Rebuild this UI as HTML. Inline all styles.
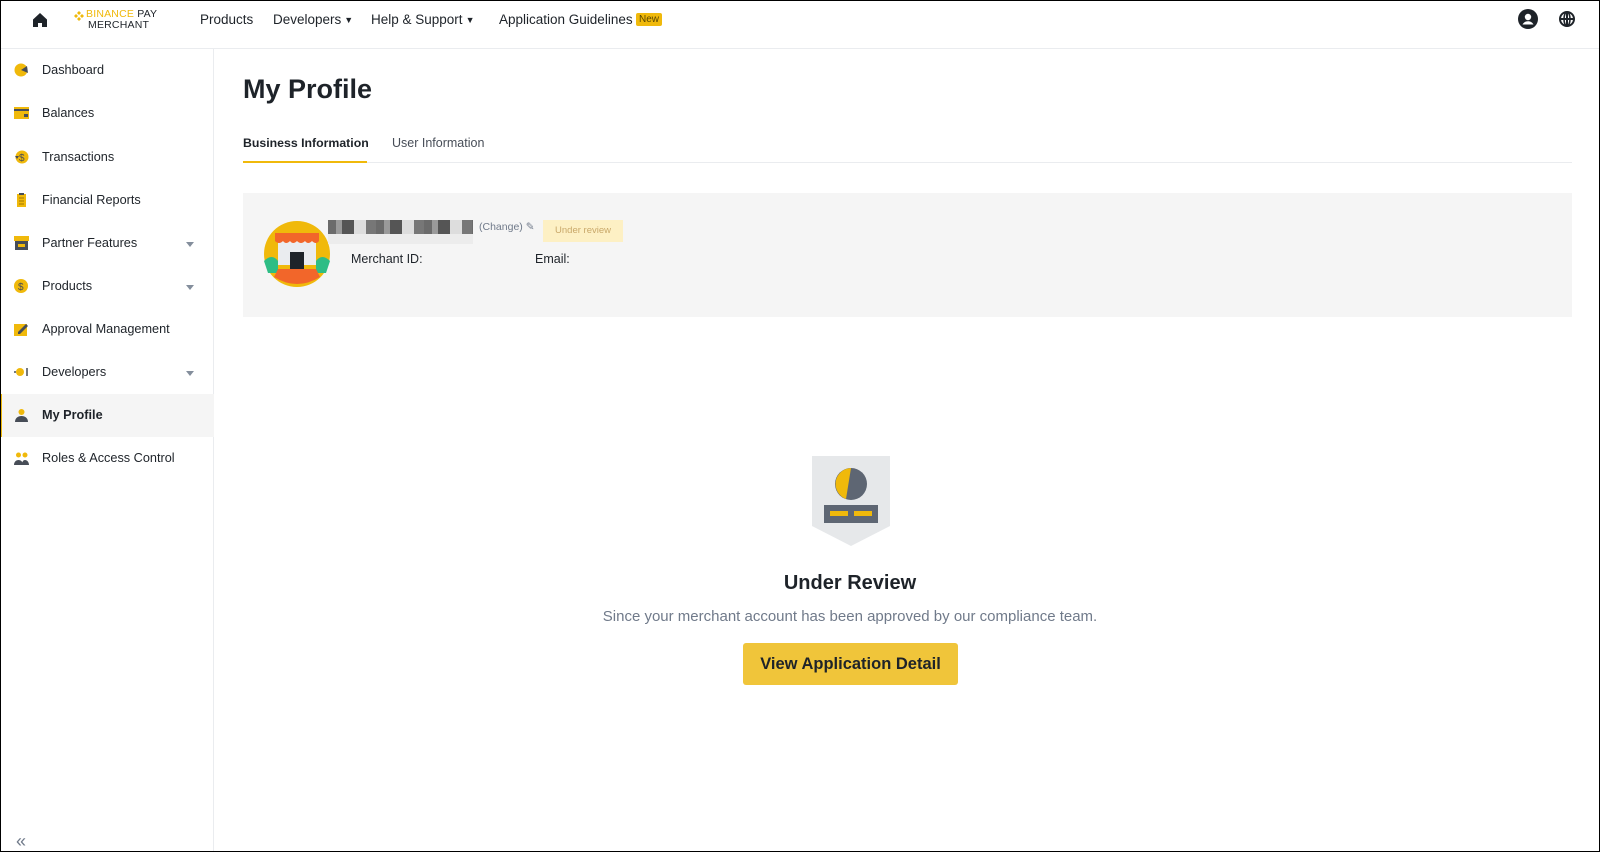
<!DOCTYPE html>
<html><head><meta charset="utf-8"><style>
*{box-sizing:border-box;margin:0;padding:0}
body{width:1600px;height:852px;overflow:hidden;background:#fff;font-family:"Liberation Sans",sans-serif;color:#1e2329;position:relative}
.frame{position:absolute;left:0;top:0;width:1600px;height:852px;border:1px solid #000;pointer-events:none;z-index:10}
.nav{position:absolute;left:0;top:0;width:1600px;height:49px;border-bottom:1px solid #eaecef;font-size:13.5px}
.nav span{position:absolute;top:12px}
.nav i{font-style:normal;font-size:9px;position:relative;top:-1px;margin-left:3px}
.side{position:absolute;left:0;top:49px;width:214px;height:803px;border-right:1px solid #eaecef}
.it{position:absolute;left:0;width:214px;height:43px;font-size:12.7px;color:#1e2329}
.it .t{position:absolute;left:42px;top:14px}
.it .ic{position:absolute;left:14px;top:14px;width:15px;height:14px}
.it .ar{position:absolute;left:186px;top:20px;border-left:4.5px solid transparent;border-right:4.5px solid transparent;border-top:5px solid #848e9c}
.abs{position:absolute}
</style></head><body>
<div class="nav">
<svg class="abs" style="left:32px;top:12px" width="16" height="16" viewBox="0 0 16 16"><path d="M8 1L1 7.5V15h5v-4h4v4h5V7.5z" fill="#1e2329"/></svg>
<svg class="abs" style="left:74px;top:11px" width="10" height="10" viewBox="0 0 10 10"><path d="M5 0L7 2 5 4 3 2zM0 5l2-2 2 2-2 2zM6 5l2-2 2 2-2 2zM5 6l2 2-2 2-2-2z" fill="#f0b90b"/></svg>
<div class="abs" style="left:86px;top:9px;font-size:10.5px;line-height:11px;letter-spacing:.2px"><span style="position:static;color:#f0b90b">BINANCE</span> PAY<br><span style="position:static;margin-left:2px">MERCHANT</span></div>
<span style="left:200px">Products</span>
<span style="left:273px">Developers<i>▼</i></span>
<span style="left:371px">Help &amp; Support<i>▼</i></span>
<span style="left:499px">Application Guidelines</span>
<span style="left:636px;top:13px;background:#f0b90b;font-size:10px;padding:1px 3px;border-radius:2px;color:#5a4600">New</span>
<svg class="abs" style="left:1518px;top:9px" width="20" height="20" viewBox="0 0 20 20"><circle cx="10" cy="10" r="10" fill="#1e2329"/><circle cx="10" cy="8" r="3.2" fill="#fff"/><path d="M4.5 15.5c1.5-2.5 3.5-3.2 5.5-3.2s4 .7 5.5 3.2z" fill="#fff"/></svg>
<svg class="abs" style="left:1559px;top:11px" width="16" height="16" viewBox="0 0 16 16"><circle cx="8" cy="8" r="7" fill="none" stroke="#1e2329" stroke-width="2"/><path d="M1 8h14M8 1v14" stroke="#1e2329" stroke-width="2"/><ellipse cx="8" cy="8" rx="3" ry="7" fill="none" stroke="#1e2329" stroke-width="1.6"/></svg>
</div>
<div class="side">
<div class="it" style="top:0"><svg class="ic" viewBox="0 0 15 14"><circle cx="7" cy="7" r="6.5" fill="#f0b90b"/><path d="M7 7L13 3 14 10z" fill="#474d57"/></svg><span class="t">Dashboard</span></div>
<div class="it" style="top:43px"><svg class="ic" viewBox="0 0 15 14"><rect x="0" y="1" width="15" height="12" fill="#f0b90b"/><rect x="0" y="3" width="15" height="2" fill="#474d57"/><rect x="10" y="8" width="4" height="3" fill="#474d57"/></svg><span class="t">Balances</span></div>
<div class="it" style="top:87px"><svg class="ic" viewBox="0 0 15 14"><circle cx="8" cy="7" r="6.5" fill="#f0b90b"/><text x="5" y="11" font-size="10" fill="#474d57">$</text><path d="M1 6l2 3 2-3z" fill="#474d57"/></svg><span class="t">Transactions</span></div>
<div class="it" style="top:130px"><svg class="ic" viewBox="0 0 15 14"><rect x="3" y="1" width="9" height="13" fill="#f0b90b"/><path d="M5 5h5M5 8h5M5 11h5" stroke="#a07800"/><rect x="5" y="0" width="5" height="2" fill="#474d57"/></svg><span class="t">Financial Reports</span></div>
<div class="it" style="top:173px"><svg class="ic" viewBox="0 0 15 14"><rect x="0" y="0" width="15" height="5" fill="#f0b90b"/><rect x="1" y="5" width="13" height="9" fill="#474d57"/><rect x="4" y="8" width="7" height="3" fill="#f0b90b"/></svg><span class="t">Partner Features</span><i class="ar"></i></div>
<div class="it" style="top:216px"><svg class="ic" viewBox="0 0 15 14"><circle cx="7" cy="7" r="7" fill="#f0b90b"/><text x="4" y="11" font-size="10" fill="#474d57">$</text></svg><span class="t">Products</span><i class="ar"></i></div>
<div class="it" style="top:259px"><svg class="ic" viewBox="0 0 15 14"><rect x="0" y="2" width="13" height="12" fill="#f0b90b"/><path d="M4 10l8-8 2 2-8 8H4z" fill="#474d57"/></svg><span class="t">Approval Management</span></div>
<div class="it" style="top:302px"><svg class="ic" viewBox="0 0 15 14"><circle cx="6" cy="7" r="4" fill="#f0b90b"/><path d="M0 7h2M13 3v8" stroke="#474d57" stroke-width="1.5"/></svg><span class="t">Developers</span><i class="ar"></i></div>
<div class="it" style="top:345px;background:#f5f5f5;border-left:2px solid #f0b90b"><svg class="ic" style="left:12px" viewBox="0 0 15 14"><circle cx="7.5" cy="4" r="3" fill="#f0b90b"/><path d="M1 14c0-4 3-6 6.5-6s6.5 2 6.5 6z" fill="#474d57"/></svg><span class="t" style="left:40px;font-weight:600">My Profile</span></div>
<div class="it" style="top:388px"><svg class="ic" viewBox="0 0 15 14"><circle cx="4.5" cy="4" r="2.5" fill="#f0b90b"/><circle cx="11" cy="4" r="2.5" fill="#f0b90b"/><path d="M0 14c0-3 2-5 4.5-5S9 11 9 14zM8 14c0-3 1-5 3-5s4 2 4 5z" fill="#474d57"/></svg><span class="t">Roles &amp; Access Control</span></div>
<div class="abs" style="left:16px;top:782px;font-size:18px;color:#707a8a">«</div>
</div>
<div class="abs" style="left:243px;top:74px;font-size:27px;font-weight:bold">My Profile</div>
<div class="abs" style="left:243px;top:136px;font-size:12.3px;font-weight:600">Business Information</div>
<div class="abs" style="left:392px;top:136px;font-size:12.5px;color:#474d57">User Information</div>
<div class="abs" style="left:243px;top:162px;width:1329px;height:1px;background:#eaecef"></div>
<div class="abs" style="left:243px;top:161px;width:124px;height:2px;background:#f0b90b"></div>
<div class="abs" style="left:243px;top:193px;width:1329px;height:124px;background:#f5f5f5"></div>
<svg class="abs" style="left:264px;top:221px" width="66" height="66" viewBox="0 0 66 66"><circle cx="33" cy="33" r="33" fill="#f0b90b"/><path d="M0 40q8-8 14 0v12H4zM66 40q-8-8-14 0v12h10z" fill="#2ebd85"/><rect x="14" y="18" width="38" height="26" fill="#eaecef"/><path d="M11 12h44v8q-3 4-7 0-4 4-7 0-4 4-8 0-4 4-7 0-4 4-7 0-4 4-8 0z" fill="#f2662a"/><rect x="26" y="31" width="14" height="17" fill="#1e2329"/><path d="M14 48h38l4 8q-23 14-46 0z" fill="#f2662a"/></svg>
<div class="abs" style="left:328px;top:220px;width:145px;height:14px;background:repeating-linear-gradient(90deg,#6b6b6b 0 8px,#9a9a9a 8px 14px,#555 14px 26px,#ddd 26px 38px,#777 38px 48px)"></div>
<div class="abs" style="left:328px;top:234px;width:145px;height:10px;background:#ececec"></div>
<div class="abs" style="left:479px;top:221px;font-size:10.5px;color:#707a8a">(Change) ✎</div>
<div class="abs" style="left:543px;top:220px;width:80px;height:22px;background:#fdf0c4;font-size:9.5px;color:#c9a86a;text-align:center;line-height:22px">Under review</div>
<div class="abs" style="left:351px;top:252px;font-size:12.5px">Merchant ID:</div>
<div class="abs" style="left:535px;top:252px;font-size:12.5px">Email:</div>
<svg class="abs" style="left:812px;top:456px" width="78" height="92" viewBox="0 0 78 92"><path d="M0 0h78v70L39 90 0 70z" fill="#e6e8ea"/><circle cx="39" cy="28" r="16" fill="#5e6673"/><path d="M39 12a16 16 0 0 0-5 31z" fill="#f0b90b"/><rect x="12" y="49" width="54" height="18" fill="#5e6673"/><rect x="18" y="55" width="18" height="5" fill="#f0b90b"/><rect x="42" y="55" width="18" height="5" fill="#f0b90b"/></svg>
<div class="abs" style="left:0;width:1700px;top:572px;text-align:center;font-size:20px;font-weight:bold;color:#1e2329">Under Review</div>
<div class="abs" style="left:0;width:1700px;top:608px;text-align:center;font-size:15px;color:#707a8a">Since your merchant account has been approved by our compliance team.</div>
<div class="abs" style="left:743px;top:643px;width:215px;height:42px;background:#f0c53a;border-radius:3px;text-align:center;line-height:42px;font-size:16.5px;font-weight:bold;color:#1e2329">View Application Detail</div>
<div class="frame"></div>
</body></html>
